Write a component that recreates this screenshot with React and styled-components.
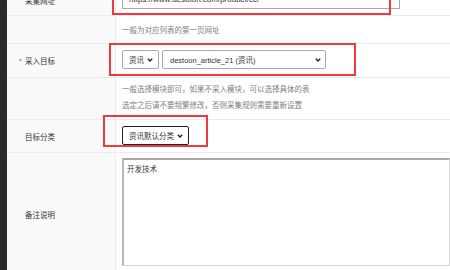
import React from "react";
import styled, { createGlobalStyle } from "styled-components";

const Global = createGlobalStyle`
  html, body {
    margin: 0;
    padding: 0;
    width: 450px;
    height: 270px;
    overflow: hidden;
    background: #ffffff;
  }
  * { box-sizing: border-box; }
`;

const Page = styled.div`
  position: relative;
  display: flex;
  width: 450px;
  height: 270px;
  overflow: hidden;
  font-family: "Noto Sans CJK SC", "Noto Sans", sans-serif;
  font-size: 7.5px;
  color: #333;
`;

const Sidebar = styled.div`
  flex: 0 0 7px;
  background: #2b2b2b;
`;

const Form = styled.div`
  flex: 1;
  display: flex;
  flex-direction: column;
  margin-top: -14px;
`;

const Row = styled.div`
  display: grid;
  grid-template-columns: 109px 1fr;
  height: ${(p) => p.$h}px;
  border-bottom: 1px solid #ebebeb;
  flex-shrink: 0;
`;

const Label = styled.div`
  display: flex;
  align-items: center;
  padding-left: 18px;
  background: #fafafa;
  border-right: 1px solid #ebebeb;
  color: #333;
  white-space: nowrap;
`;

const Star = styled.span`
  width: 6px;
  margin-left: -6px;
  color: #ff2020;
  font-size: 7px;
`;

const Value = styled.div`
  display: flex;
  flex-direction: ${(p) => (p.$col ? "column" : "row")};
  align-items: ${(p) => (p.$center ? "center" : "flex-start")};
  padding: ${(p) => p.$pt || 0}px 0 0 6px;
  gap: 3px;
  min-width: 0;
`;

const Hint = styled.div`
  color: #808080;
  line-height: 16px;
  white-space: nowrap;
`;

const TextInput = styled.div`
  width: 278px;
  height: 19px;
  border: 1px solid #a9a9a9;
  padding: 0 6px;
  display: flex;
  align-items: center;
  font-family: "Liberation Sans", sans-serif;
  font-size: 8px;
  color: #333;
  background: #fff;
  white-space: nowrap;
`;

const Select = styled.div`
  width: ${(p) => p.$w}px;
  height: 19px;
  border: 1px solid ${(p) => (p.$focus ? "#222" : "#a9a9a9")};
  border-radius: 2px;
  background: #fff;
  display: flex;
  align-items: center;
  justify-content: space-between;
  padding: 0 ${(p) => p.$pr || 5}px 0 ${(p) => p.$pl || 6}px;
  color: #333;
  white-space: nowrap;
  flex-shrink: 0;
`;

const Latin = styled.span`
  font-family: "Liberation Sans", "Noto Sans CJK SC", sans-serif;
  font-size: 7.5px;
`;

const TextArea = styled.div`
  width: 345px;
  height: 108px;
  border: 1px solid #d6d6d6;
  border-top: 2px solid #a9a9a9;
  border-left: 2px solid #b8b8b8;
  background: #fff;
  padding: 4px 3px;
  color: #333;
  line-height: 10px;
`;

const Mark = styled.div`
  position: absolute;
  left: ${(p) => p.$x}px;
  top: ${(p) => p.$y}px;
  width: ${(p) => p.$w}px;
  height: ${(p) => p.$h}px;
  border: 2px solid #ee3a3f;
  pointer-events: none;
`;

const Chevron = () => (
  <svg width="6" height="4" viewBox="0 0 6 4">
    <path d="M0.8 0.8 L3 3 L5.2 0.8" fill="none" stroke="#222" strokeWidth="1.4" />
  </svg>
);

export default function App() {
  return (
    <>
      <Global />
      <Page>
        <Sidebar />
        <Form>
          <Row $h={30}>
            <Label>采集网址</Label>
            <Value $pt={4}>
              <TextInput>https://www.destoon.com/product/cc/</TextInput>
            </Value>
          </Row>
          <Row $h={28}>
            <Label />
            <Value $center>
              <Hint>一般为对应列表的第一页网址</Hint>
            </Value>
          </Row>
          <Row $h={34}>
            <Label>
              <Star>*</Star>采入目标
            </Label>
            <Value $pt={6}>
              <Select $w={37}>
                资讯
                <Chevron />
              </Select>
              <Select $w={164} $pl={7} $pr={4}>
                <Latin>destoon_article_21 (资讯)</Latin>
                <Chevron />
              </Select>
            </Value>
          </Row>
          <Row $h={42}>
            <Label />
            <Value $col $pt={3}>
              <Hint>
                一般选择模块即可，如果不采入模块，可以选择具体的表
                <br />
                选定之后请不要频繁修改，否则采集规则需要重新设置
              </Hint>
            </Value>
          </Row>
          <Row $h={33}>
            <Label>目标分类</Label>
            <Value $pt={6}>
              <Select $w={67} $focus>
                资讯默认分类
                <Chevron />
              </Select>
            </Value>
          </Row>
          <Row $h={124}>
            <Label>备注说明</Label>
            <Value $pt={5}>
              <TextArea>开发技术</TextArea>
            </Value>
          </Row>
        </Form>
        <Mark $x={112} $y={-10} $w={279} $h={25} />
        <Mark $x={109} $y={43} $w={247} $h={33} />
        <Mark $x={103} $y={115} $w={105} $h={32} />
      </Page>
    </>
  );
}
